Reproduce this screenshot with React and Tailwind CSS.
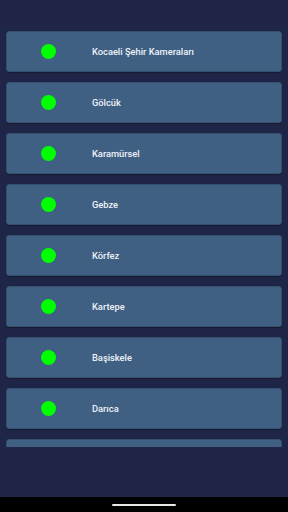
import React from "react";

const items = [
  "Kocaeli Şehir Kameraları",
  "Gölcük",
  "Karamürsel",
  "Gebze",
  "Körfez",
  "Kartepe",
  "Başiskele",
  "Darıca",
];

function Row({ title }) {
  return (
    <div className="h-[41px] shrink-0 flex items-center rounded-[3px] bg-[#3f5f83] border border-[#35506f] shadow-[0_1px_1px_rgba(0,0,0,0.3)]">
      <div className="w-[15px] h-[15px] rounded-full bg-[#00ff00] ml-[34px]" />
      <span className="ml-[36px] text-[9.3px] font-medium text-[#eef2f8]">{title}</span>
    </div>
  );
}

export default function App() {
  return (
    <div className="w-[288px] h-[512px] flex flex-col bg-[#1f2547] overflow-hidden" style={{ fontFamily: "Roboto, 'Noto Sans', sans-serif" }}>
      <div className="h-[31px] shrink-0" />
      <div className="h-[416px] shrink-0 overflow-hidden flex flex-col gap-[10px] px-[6px]">
        {items.map((t) => (
          <Row key={t} title={t} />
        ))}
        <div className="h-[41px] shrink-0 rounded-[3px] bg-[#3f5f83] border border-[#35506f]" />
      </div>
      <div className="flex-1" />
      <div className="h-[15px] shrink-0 bg-black flex items-center justify-center">
        <div className="w-[64px] h-[2px] rounded-full bg-[#e8e8e8]" />
      </div>
    </div>
  );
}
